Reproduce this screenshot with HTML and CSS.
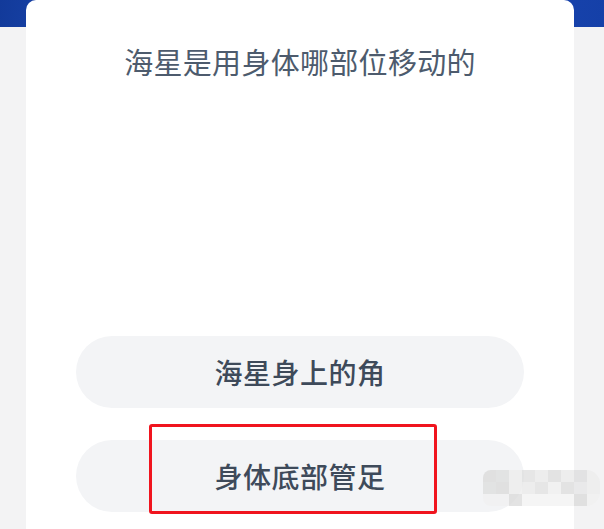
FILE: index.html
```html
<!DOCTYPE html>
<html lang="zh-CN">
<head>
    <meta charset="UTF-8">
    <meta name="viewport" content="width=device-width, initial-scale=1.0">
    <title>答题</title>
    <link rel="stylesheet" href="styles.css">
</head>
<body>
    <div class="quiz-card">
        <h1 class="question">海星是用身体哪部位移动的</h1>
        <div class="options">
            <div class="option">海星身上的角</div>
            <div class="option">
                身体底部管足
                <span class="mark"></span>
            </div>
        </div>
    </div>
    <div class="watermark">
        <span></span><span></span><span></span><span></span><span></span><span></span><span></span><span></span><span></span>
        <span></span><span></span><span></span><span></span><span></span><span></span><span></span><span></span><span></span>
        <span></span><span></span><span></span><span></span><span></span><span></span><span></span><span></span><span></span>
    </div>
</body>
</html>
```

FILE: styles.css
```css
html, body {
    height: 100%;
}
body {
    margin: 0;
    font-family: "Noto Sans CJK SC", "Noto Sans", sans-serif;
    background:
        linear-gradient(100deg, #123a9a 0%, #2454c4 30%, #1c4ab8 60%, #1540a8 100%) top / 100% 27px no-repeat,
        #f3f3f4;
    overflow: hidden;
    position: relative;
}
.quiz-card {
    margin: 0 30px 0 26px;
    height: 100%;
    background: #fff;
    border-radius: 10px 10px 0 0;
    padding-top: 41px;
    box-sizing: border-box;
}
.question {
    margin: 0;
    text-align: center;
    font-size: 29px;
    line-height: 40px;
    font-weight: 400;
    color: #4d5b6d;
    letter-spacing: 0.3px;
}
.options {
    margin: 255px 50px 0 50px;
    display: flex;
    flex-direction: column;
    gap: 32px;
}
.option {
    position: relative;
    height: 72px;
    border-radius: 36px;
    background: #f3f4f6;
    display: flex;
    align-items: center;
    justify-content: center;
    font-size: 28px;
    font-weight: 500;
    color: #3e4a5a;
    letter-spacing: 0.5px;
}
.mark {
    position: absolute;
    left: 73px;
    top: -16px;
    width: 282px;
    height: 84px;
    border: 3px solid #f0141e;
    border-radius: 3px;
}
.watermark {
    position: absolute;
    right: 4px;
    bottom: 23px;
    width: 117px;
    height: 36px;
    border-radius: 8px 14px 14px 8px;
    overflow: hidden;
    display: grid;
    grid-template-columns: repeat(9, 1fr);
    grid-template-rows: repeat(3, 1fr);
    opacity: 0.7;
}
.watermark span {
    background: #e6e6e6;
}
.watermark span:nth-child(2n) {
    background: #dcdcdc;
}
.watermark span:nth-child(3n) {
    background: #ececec;
}
.watermark span:nth-child(n+19) {
    background: #f1f1f1;
}
.watermark span:nth-child(5n+1) {
    background: #d8d8d8;
}
```
